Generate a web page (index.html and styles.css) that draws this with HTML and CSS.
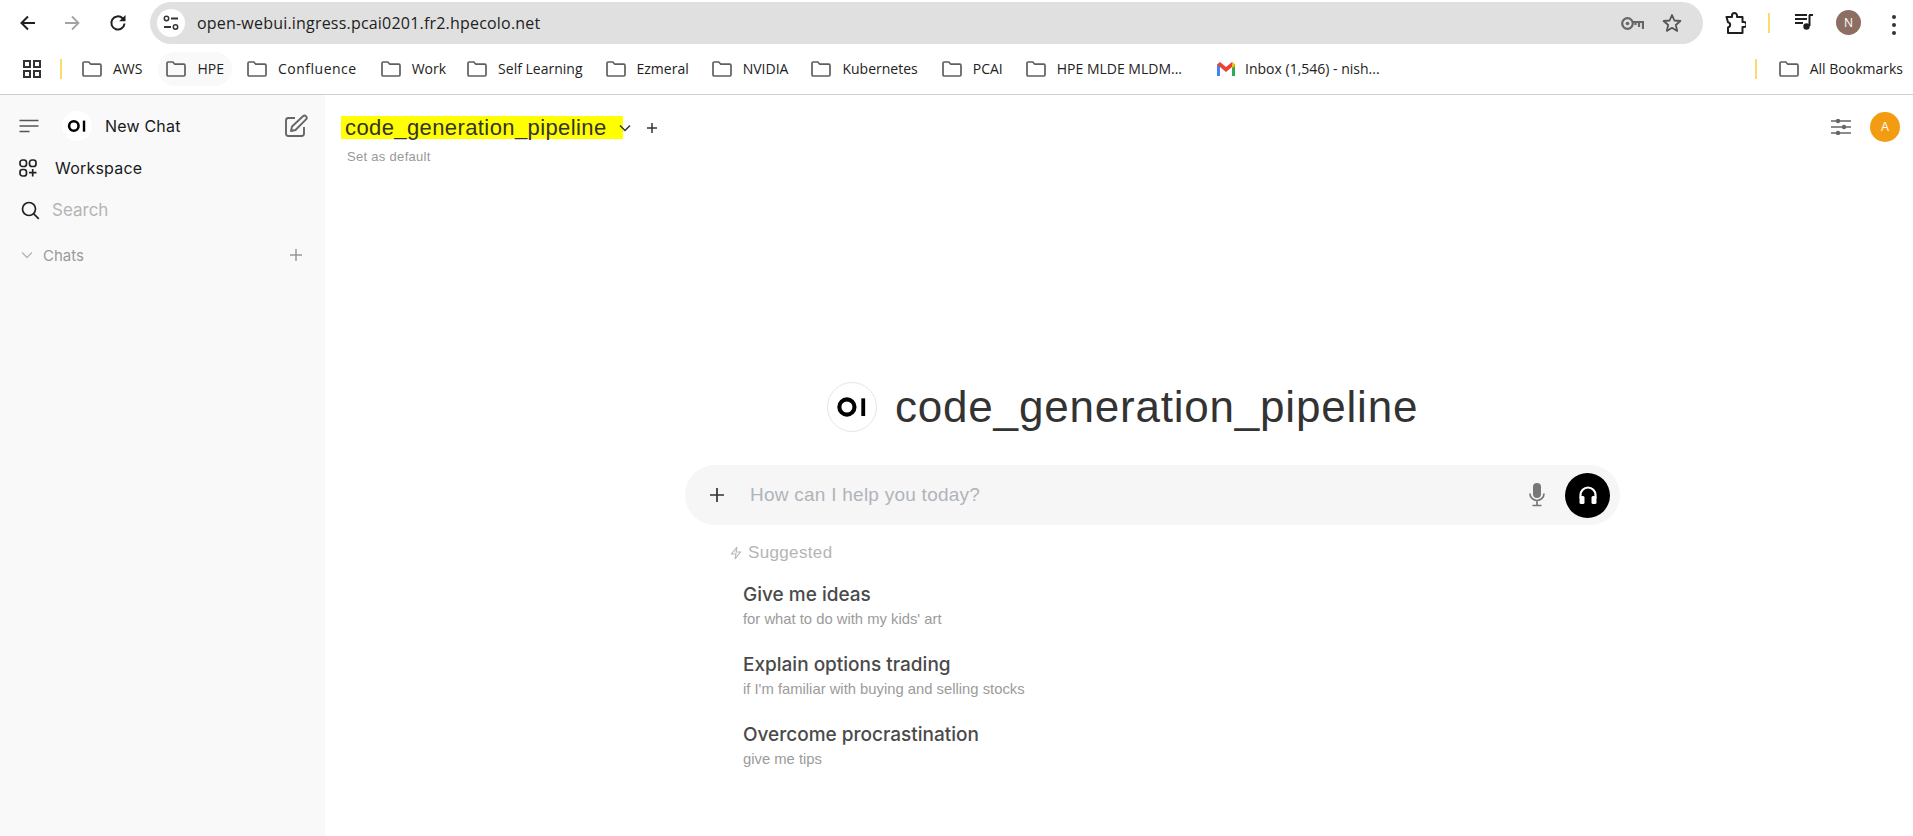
FILE: index.html
```html
<!DOCTYPE html>
<html>
<head>
<meta charset="utf-8">
<title>Open WebUI</title>
<link rel="stylesheet" href="styles.css">
</head>
<body>

<svg class="defs" width="0" height="0">
  <symbol id="folder" viewBox="0 0 20 16">
    <path d="M1 2.2C1 1.5 1.500 1 2.200 1h4.600l2 2.200h9c.7 0 1.200.5 1.200 1.200v9.400c0 .7-.5 1.200-1.200 1.200H2.200c-.7 0-1.200-.5-1.200-1.200z" fill="none" stroke="#5f5f5f" stroke-width="1.700"/>
  </symbol>
  <symbol id="oi" viewBox="0 0 50 50">
    <circle cx="19.7" cy="25" r="7.9" fill="none" stroke="#000" stroke-width="4.3"/>
    <rect x="34.7" y="16" width="4" height="18.4" fill="#000"/>
  </symbol>
</svg>

<div class="toolbar">
  <svg class="tool-icon back" width="20" height="20" viewBox="0 0 20 20"><path d="M17 10H4M10 3.5 3.5 10l6.500 6.500" fill="none" stroke="#1f1f1f" stroke-width="2"/></svg>
  <svg class="tool-icon forward" width="20" height="20" viewBox="0 0 20 20"><path d="M3 10h13M10 3.500l6.500 6.500-6.500 6.500" fill="none" stroke="#a3a3a3" stroke-width="1.800"/></svg>
  <svg class="tool-icon reload" width="20" height="20" viewBox="0 0 20 20"><path d="M16.500 10.500a6.600 6.600 0 1 1-1.900-5.200L16.500 7" fill="none" stroke="#1f1f1f" stroke-width="2"/><path d="M17.500 2v6.300h-6.300z" fill="#1f1f1f"/></svg>
  <div class="omnibox">
    <span class="site-btn">
      <svg width="18" height="16" viewBox="0 0 18 16"><circle cx="4.500" cy="3.500" r="2.200" fill="none" stroke="#333" stroke-width="1.500"/><path d="M9 3.500h7M2 12h7" stroke="#333" stroke-width="1.800"/><circle cx="13.500" cy="12" r="2.200" fill="none" stroke="#333" stroke-width="1.500"/></svg>
    </span>
    <span class="url">open-webui.ingress.pcai0201.fr2.hpecolo.net</span>
    <svg class="key" width="23" height="13" viewBox="0 0 23 13"><circle cx="6.500" cy="6.500" r="5.300" fill="none" stroke="#666" stroke-width="2.200"/><circle cx="6.500" cy="6.500" r="1.800" fill="#666"/><path d="M11 5h11v7M18 5v5M14.500 5v3" fill="none" stroke="#666" stroke-width="2.200"/></svg>
    <svg class="star" width="20" height="20" viewBox="0 0 20 20"><path d="m10 2 2.400 5.500 6 .5-4.600 4 1.400 5.900L10 14.800l-5.200 3.100L6.200 12 1.600 8l6-.5z" fill="none" stroke="#555" stroke-width="1.800" stroke-linejoin="round"/></svg>
  </div>
  <svg class="ext" width="22" height="22" viewBox="0 0 22 22"><path d="M2.500 5H8V3.500a2.500 2.500 0 0 1 5 0V5h5.500v5H20a2.500 2.500 0 0 1 0 5h-1.500v6H4v-5.500a2.700 2.700 0 0 0 0-5.300z" fill="none" stroke="#1f1f1f" stroke-width="2" stroke-linejoin="round"/></svg>
  <span class="yellow-bar tool-bar"></span>
  <svg class="music" width="20" height="18" viewBox="0 0 20 18"><path d="M1 2h12M1 6h12M1 10h8" stroke="#1f1f1f" stroke-width="1.800"/><path d="M15 2h4M15.500 2v11" fill="none" stroke="#1f1f1f" stroke-width="2"/><circle cx="12.500" cy="13.500" r="3.200" fill="#1f1f1f"/></svg>
  <span class="avatar-n">N</span>
  <span class="dots"><i></i><i></i><i></i></span>
</div>

<div class="bookmarks">
  <svg class="apps" width="18" height="18" viewBox="0 0 18 18"><g fill="none" stroke="#333" stroke-width="2"><rect x="1" y="1" width="6" height="6"/><rect x="11" y="1" width="6" height="6"/><rect x="1" y="11" width="6" height="6"/><rect x="11" y="11" width="6" height="6"/></g></svg>
  <span class="yellow-bar mark-bar"></span>
  <a class="mark"><svg><use href="#folder"/></svg>AWS</a>
  <a class="mark hover"><svg><use href="#folder"/></svg>HPE</a>
  <a class="mark wide"><svg><use href="#folder"/></svg>Confluence</a>
  <a class="mark tighter"><svg><use href="#folder"/></svg>Work</a>
  <a class="mark tight"><svg><use href="#folder"/></svg>Self Learning</a>
  <a class="mark tight"><svg><use href="#folder"/></svg>Ezmeral</a>
  <a class="mark tight"><svg><use href="#folder"/></svg>NVIDIA</a>
  <a class="mark"><svg><use href="#folder"/></svg>Kubernetes</a>
  <a class="mark tight"><svg><use href="#folder"/></svg>PCAI</a>
  <a class="mark"><svg><use href="#folder"/></svg>HPE MLDE MLDM...</a>
  <a class="mark gmail">
    <svg viewBox="0 0 20 16"><path d="M1 15V3l3 2v10z" fill="#4285f4"/><path d="M16 15V5l3-2v12z" fill="#34a853"/><path d="M1 3.500 4 1l6 5 6-5 3 2.500L10 11z" fill="#ea4335"/><path d="M16 1l3 2.500V5l-3 2z" fill="#fbbc04"/></svg>Inbox (1,546) - nish...</a>
  <span class="yellow-bar all-bar"></span>
  <a class="mark all"><svg><use href="#folder"/></svg>All Bookmarks</a>
</div>

<div class="app">
  <div class="sidebar">
    <div class="side-row">
      <svg class="side-icon" width="20" height="14" viewBox="0 0 20 14"><path d="M.5 1.500h19M.5 7h19M.5 12.500h10" stroke="#555" stroke-width="1.600"/></svg>
      <svg class="logo-small" width="30" height="30"><use href="#oi"/></svg>
      <span class="new-chat">New Chat</span>
      <svg class="edit" width="24" height="24" viewBox="0 0 24 24"><path d="M11 4H4.500A2.500 2.500 0 0 0 2 6.500v13A2.500 2.500 0 0 0 4.500 22h13a2.500 2.500 0 0 0 2.500-2.500V13" fill="none" stroke="#666" stroke-width="1.900"/><path d="M19.500 1.800a2.300 2.300 0 0 1 3 3.100L11.500 16 7 17l1-4.500z" fill="none" stroke="#666" stroke-width="1.900" stroke-linejoin="round"/></svg>
    </div>
    <div class="side-row">
      <svg class="side-icon" width="18" height="18" viewBox="0 0 18 18"><g fill="none" stroke="#222" stroke-width="1.700"><rect x="1" y="1" width="6.500" height="6.500" rx="2.500"/><rect x="10.500" y="1" width="6.500" height="6.500" rx="2.500"/><rect x="1" y="10.500" width="6.500" height="6.500" rx="2.500"/><path d="M13.700 10v7.500M10 13.700h7.500"/></g></svg>
      <span class="workspace">Workspace</span>
    </div>
    <div class="side-row">
      <svg class="side-icon search-icon" width="19" height="19" viewBox="0 0 19 19"><circle cx="8" cy="8" r="6.500" fill="none" stroke="#222" stroke-width="1.700"/><path d="m12.800 12.800 5 5" stroke="#222" stroke-width="1.700"/></svg>
      <span class="search">Search</span>
    </div>
    <div class="side-row chats-row">
      <svg class="chev" width="12" height="8" viewBox="0 0 12 8"><path d="m1 1.500 5 5 5-5" fill="none" stroke="#b5b5b5" stroke-width="1.300"/></svg>
      <span class="chats">Chats</span>
      <svg class="chats-plus" width="14" height="14" viewBox="0 0 14 14"><path d="M7 1v12M1 7h12" stroke="#999" stroke-width="1.500"/></svg>
    </div>
  </div>

  <div class="content">
    <div class="header">
      <div class="model-col">
        <div class="model-row">
          <span class="model-name">code_generation_pipeline</span>
          <svg class="model-chev" width="12" height="8" viewBox="0 0 12 8"><path d="m1 1.500 5 5 5-5" fill="none" stroke="#333" stroke-width="1.500"/></svg>
          <svg class="model-plus" width="12" height="12" viewBox="0 0 12 12"><path d="M6 1v10M1 6h10" stroke="#333" stroke-width="1.500"/></svg>
        </div>
        <div class="set-default">Set as default</div>
      </div>
      <svg class="sliders" width="20" height="16" viewBox="0 0 20 16"><g stroke="#666" stroke-width="1.600"><path d="M0 2h20M0 8h20M0 14h20"/></g><g fill="#666"><circle cx="7" cy="2" r="2.200"/><circle cx="13" cy="8" r="2.200"/><circle cx="7" cy="14" r="2.200"/></g></svg>
      <span class="avatar-a">A</span>
    </div>

    <div class="hero">
      <span class="hero-logo"><svg width="50" height="50"><use href="#oi"/></svg></span>
      <h1 class="hero-title">code_generation_pipeline</h1>
    </div>

    <div class="chat-input">
      <svg class="input-plus" width="16" height="16" viewBox="0 0 16 16"><path d="M8 1v14M1 8h14" stroke="#333" stroke-width="1.700"/></svg>
      <span class="placeholder">How can I help you today?</span>
      <svg class="mic" width="16" height="24" viewBox="0 0 16 24"><rect x="4" y="0" width="8" height="15" rx="4" fill="#777"/><path d="M1 10.500a7 7 0 0 0 14 0M8 18v4M3.500 22.500h9" fill="none" stroke="#777" stroke-width="1.700"/></svg>
      <span class="call-btn">
        <svg width="22" height="22" viewBox="0 0 22 22"><path d="M3.500 14v-3a7.500 7.500 0 0 1 15 0v3" fill="none" stroke="#fff" stroke-width="2.200"/><rect x="2.500" y="12" width="5" height="8" rx="1.500" fill="#fff"/><rect x="14.500" y="12" width="5" height="8" rx="1.500" fill="#fff"/></svg>
      </span>
    </div>

    <div class="suggest">
      <div class="suggest-head">
        <svg width="12" height="14" viewBox="0 0 12 14"><path d="M7 1 1.500 8H6l-1 5 5.500-7H6z" fill="none" stroke="#b5b5b5" stroke-width="1.100"/></svg>
        <span>Suggested</span>
      </div>
      <div class="prompt">
        <div class="prompt-title">Give me ideas</div>
        <div class="prompt-sub">for what to do with my kids' art</div>
      </div>
      <div class="prompt">
        <div class="prompt-title">Explain options trading</div>
        <div class="prompt-sub">if I'm familiar with buying and selling stocks</div>
      </div>
      <div class="prompt">
        <div class="prompt-title">Overcome procrastination</div>
        <div class="prompt-sub">give me tips</div>
      </div>
    </div>
  </div>
</div>

</body>
</html>
```

FILE: styles.css
```css
* {
  box-sizing: border-box;
}

html, body {
  margin: 0;
  height: 100%;
  overflow: hidden;
  background: #fff;
}

body {
  display: flex;
  flex-direction: column;
  font-family: "Liberation Sans", Arial, sans-serif;
}

.defs {
  position: absolute;
}

/* browser chrome */
.toolbar {
  height: 47px;
  display: flex;
  align-items: flex-start;
  padding-top: 2px;
  flex: none;
}

.tool-icon {
  flex: none;
  margin-top: 11px;
}

.back {
  margin-left: 18px;
}

.forward {
  margin-left: 24px;
}

.reload {
  margin-left: 26px;
}

.omnibox {
  margin-left: 22px;
  width: 1553px;
  height: 42px;
  border-radius: 21px;
  background: #e0e0e0;
  display: flex;
  align-items: center;
  padding-left: 7px;
  padding-right: 21px;
}

.site-btn {
  width: 28px;
  height: 28px;
  border-radius: 50%;
  background: #fff;
  display: flex;
  align-items: center;
  justify-content: center;
}

.url {
  margin-left: 12px;
  font-family: "Open Sans", sans-serif;
  font-size: 16px;
  letter-spacing: 0.2px;
  color: #222;
  flex: 1;
  white-space: nowrap;
}

.star {
  margin-left: 18px;
}

.ext {
  margin-left: 21px;
  margin-top: 10px;
}

.yellow-bar {
  width: 2px;
  height: 20px;
  background: #fbdc6a;
  flex: none;
}

.tool-bar {
  margin-left: 22px;
  margin-top: 11px;
}

.music {
  margin-left: 24px;
  margin-top: 11px;
}

.avatar-n {
  margin-left: 22px;
  margin-top: 8px;
  width: 25px;
  height: 25px;
  border-radius: 50%;
  background: #8d6e63;
  color: #fff;
  font-family: "Open Sans", sans-serif;
  font-size: 12px;
  display: flex;
  align-items: center;
  justify-content: center;
}

.dots {
  margin-left: 31px;
  margin-top: 13px;
  display: flex;
  flex-direction: column;
  gap: 4px;
}

.dots i {
  width: 4px;
  height: 4px;
  border-radius: 50%;
  background: #333;
}

.bookmarks {
  height: 48px;
  flex: none;
  display: flex;
  align-items: center;
  border-bottom: 1px solid #cfcfcf;
  padding-left: 23px;
  padding-bottom: 4px;
  font-family: "Open Sans", sans-serif;
  font-size: 14px;
  color: #222;
}

.apps {
  flex: none;
}

.mark-bar {
  margin-left: 19px;
  margin-right: 20px;
}

.mark {
  display: flex;
  align-items: center;
  gap: 11px;
  margin-right: 24px;
  white-space: nowrap;
  height: 34px;
}

.mark svg {
  width: 20px;
  height: 16px;
  flex: none;
}

.hover {
  background: #f9f9f9;
  border-radius: 17px;
  padding: 0 8px;
  margin-left: -8px;
  margin-right: 15px;
}

.wide {
  letter-spacing: 0.5px;
}

.tight {
  margin-right: 23px;
}

.tighter {
  margin-right: 21px;
}

.gmail {
  margin-left: 10px;
  gap: 9px;
}

.all-bar {
  margin-left: auto;
  margin-right: 22px;
}

.all {
  margin-right: 10px;
}

/* app */
.app {
  flex: 1;
  display: flex;
  min-height: 0;
}

.sidebar {
  width: 325px;
  flex: none;
  background: #f9f9f9;
  padding-top: 10px;
}

.side-row {
  height: 42px;
  display: flex;
  align-items: center;
  padding-left: 19px;
  font-family: Inter, sans-serif;
  color: #1a1a1a;
}

.side-icon {
  flex: none;
}

.logo-small {
  margin-left: 23px;
  background: #fff;
  border-radius: 50%;
}

.new-chat {
  margin-left: 13px;
  font-size: 16px;
  letter-spacing: 0.2px;
}

.edit {
  margin-left: auto;
  margin-right: 17px;
}

.workspace {
  margin-left: 18px;
  font-size: 16px;
  letter-spacing: 0.2px;
}

.search-icon {
  margin-left: 2px;
}

.search {
  margin-left: 12px;
  font-size: 17px;
  color: #b4b4b4;
}

.chats-row {
  margin-top: 3px;
  padding-left: 21px;
}

.chats {
  margin-left: 10px;
  font-size: 15px;
  color: #9a9a9a;
}

.chats-plus {
  margin-left: auto;
  margin-right: 22px;
}

.content {
  flex: 1;
  min-width: 0;
}

.header {
  height: 80px;
  display: flex;
  align-items: flex-start;
  padding-left: 16px;
  padding-top: 21px;
}

.model-row {
  display: flex;
  align-items: center;
}

.model-name {
  background: #ffff00;
  padding: 0 16px 0 4px;
  font-size: 22px;
  letter-spacing: 0.4px;
  line-height: 23px;
  color: #333;
}

.model-chev {
  margin-left: -4px;
}

.model-plus {
  margin-left: 15px;
}

.set-default {
  margin-top: 10px;
  margin-left: 6px;
  font-size: 13px;
  letter-spacing: 0.3px;
  color: #999;
}

.sliders {
  margin-left: auto;
  margin-top: 3px;
}

.avatar-a {
  margin-left: 19px;
  margin-right: 13px;
  margin-top: -4px;
  width: 30px;
  height: 30px;
  border-radius: 50%;
  background: #f39c12;
  color: #fff;
  font-size: 12px;
  display: flex;
  align-items: center;
  justify-content: center;
}

.hero {
  margin-top: 207px;
  margin-left: 502px;
  display: flex;
  align-items: center;
  gap: 18px;
}

.hero-logo {
  width: 50px;
  height: 50px;
  border: 1px solid #e5e5e5;
  border-radius: 50%;
  flex: none;
  display: flex;
  align-items: center;
  justify-content: center;
}

.hero-title {
  margin: 0;
  font-size: 44px;
  letter-spacing: 0.8px;
  font-weight: 400;
  color: #333;
  white-space: nowrap;
}

.chat-input {
  margin-top: 33px;
  margin-left: 360px;
  width: 935px;
  height: 60px;
  border-radius: 30px;
  background: #f6f6f6;
  display: flex;
  align-items: center;
  padding-left: 24px;
  padding-right: 10px;
}

.placeholder {
  margin-left: 25px;
  font-size: 19px;
  letter-spacing: 0.25px;
  color: #b0b4ba;
  flex: 1;
}

.call-btn {
  margin-left: 20px;
  width: 45px;
  height: 45px;
  border-radius: 50%;
  background: #000;
  display: flex;
  align-items: center;
  justify-content: center;
}

.suggest {
  margin-left: 405px;
  margin-top: 18px;
}

.suggest-head {
  display: flex;
  align-items: center;
  gap: 6px;
  font-size: 17px;
  letter-spacing: 0.35px;
  color: #b5b5b5;
  height: 20px;
  margin-bottom: 21px;
}

.prompt {
  padding-left: 13px;
  height: 70px;
}

.prompt-title {
  font-family: Inter, sans-serif;
  font-size: 19px;
  line-height: 22px;
  font-weight: 500;
  color: #4a4a4a;
}

.prompt-sub {
  margin-top: 5px;
  font-size: 14.8px;
  line-height: 17px;
  color: #9b9b9b;
}
```
